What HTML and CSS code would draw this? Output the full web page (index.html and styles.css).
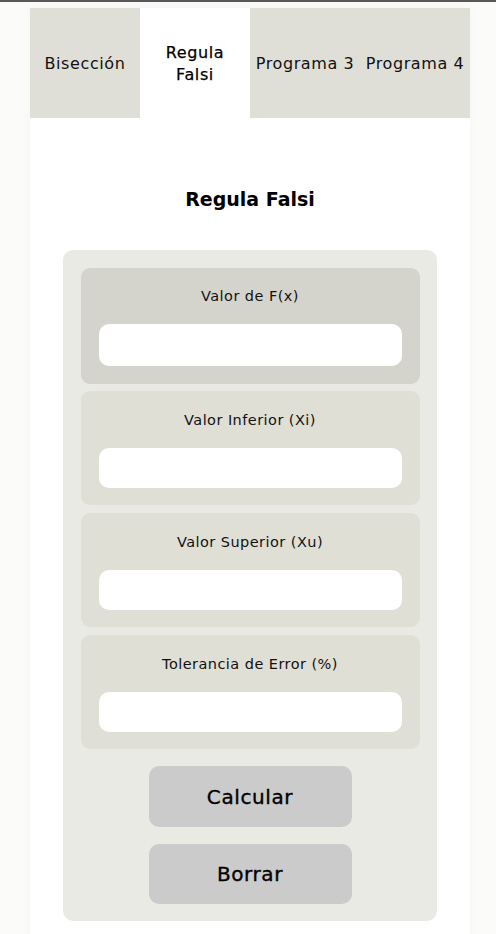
FILE: index.html
```html
<!DOCTYPE html>
<html lang="es">
<head>
<meta charset="utf-8">
<title>Regula Falsi</title>
<link rel="stylesheet" href="styles.css">
</head>
<body>
<div class="app">
  <nav class="tabs">
    <div class="tab">Bisección</div>
    <div class="tab tab-active">Regula<br>Falsi</div>
    <div class="tab">Programa 3</div>
    <div class="tab">Programa 4</div>
  </nav>
  <h1 class="title">Regula Falsi</h1>
  <form class="panel">
    <div class="field field-focus">
      <label class="label">Valor de F(x)</label>
      <input class="input input-lg" type="text">
    </div>
    <div class="field">
      <label class="label">Valor Inferior (Xi)</label>
      <input class="input" type="text">
    </div>
    <div class="field">
      <label class="label">Valor Superior (Xu)</label>
      <input class="input" type="text">
    </div>
    <div class="field">
      <label class="label">Tolerancia de Error (%)</label>
      <input class="input" type="text">
    </div>
    <button class="btn" type="button">Calcular</button>
    <button class="btn" type="button">Borrar</button>
  </form>
</div>
</body>
</html>
```
FILE: styles.css
```css
* { box-sizing: border-box; }
html, body { margin: 0; padding: 0; }
body {
  background: #fbfbf9;
  border-top: 2px solid #585858;
  font-family: "DejaVu Sans", "Noto Sans", sans-serif;
  color: #111;
  height: 934px;
  overflow: hidden;
}
.app {
  width: 440px;
  margin: 6px 0 0 30px;
  background: #fff;
  min-height: 940px;
  box-shadow: 0 0 12px rgba(0,0,0,0.03);
  display: flex;
  flex-direction: column;
  align-items: center;
}
.tabs {
  display: flex;
  width: 100%;
}
.tab {
  width: 110px;
  height: 110px;
  background: #e0dfd7;
  display: flex;
  align-items: center;
  justify-content: center;
  text-align: center;
  font-size: 16px;
  line-height: 22px;
  white-space: nowrap;
  letter-spacing: 0.6px;
  padding-top: 2px;
}
.tab-active {
  background: #fff;
  color: #000;
  -webkit-text-stroke: 0.25px #000;
}
.title {
  margin: 69px 0 0;
  font-size: 19px;
  line-height: 24px;
  font-weight: 800;
  color: #000;
}
.panel {
  margin-top: 39px;
  width: 374px;
  background: #eaeae5;
  border-radius: 10px;
  padding: 18px 17px 17px;
  display: flex;
  flex-direction: column;
  align-items: center;
}
.field {
  width: 339px;
  background: #e0dfd6;
  border-radius: 9px;
  padding: 19px 18px 17px;
  display: flex;
  flex-direction: column;
  align-items: center;
  margin-bottom: 8px;
}
.field-focus {
  background: #d5d4cc;
  padding: 18px 18px 18px;
  margin-bottom: 7px;
}
.label {
  font-size: 14.5px;
  line-height: 20px;
  letter-spacing: 0.45px;
  color: #111;
  margin-bottom: 18px;
}
.input {
  width: 303px;
  height: 40px;
  border: none;
  border-radius: 10px;
  background: #fff;
  outline: none;
}
.input-lg { height: 42px; }
.field:last-of-type { margin-bottom: 17px; }
.btn {
  width: 203px;
  height: 61px;
  border: none;
  border-radius: 10px;
  background: #cbcbcb;
  font-family: inherit;
  font-size: 20px;
  letter-spacing: 0.6px;
  color: #000;
  -webkit-text-stroke: 0.35px #000;
  margin-bottom: 17px;
}
.btn:last-child { margin-bottom: 0; height: 60px; }
```
